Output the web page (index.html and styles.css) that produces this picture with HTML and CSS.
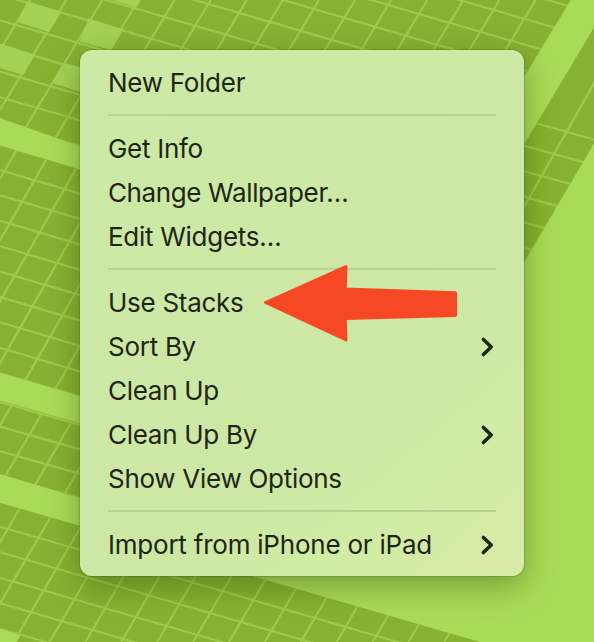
FILE: index.html
```
<!DOCTYPE html>
<html lang="en">
<head>
<meta charset="utf-8">
<title>Desktop</title>
<link rel="stylesheet" href="styles.css">
</head>
<body>
<main class="desktop">
  <svg class="wallpaper" viewBox="0 0 594 642" aria-hidden="true">
    <defs>
      <clipPath id="top"><path d="M0 0H571L524 77L400 260L0 118Z"/></clipPath>
      <clipPath id="left"><path d="M0 145.5L200 205.5V431L0 372.5Z"/></clipPath>
      <clipPath id="strip"><path d="M0 400.5L200 457.5V534L0 474Z"/></clipPath>
      <clipPath id="bottom"><path d="M0 502.7L480 642H17L20.5 635L0 628.5Z"/></clipPath>
      <clipPath id="right"><path d="M594 27.5L500 185V303L594 143.5Z"/></clipPath>
    </defs>
    <rect class="ground" width="594" height="642"/>
    <g id="grids"></g>
    <g class="bright">
      <path d="M27.5 1.5L61.5 12L49 32L17 22Z"/>
      <path d="M88.5 18.5L123.5 29.5L111.5 50L79.5 41.5Z"/>
      <path d="M0 43.5L35 54.5L23.5 75L0 68Z"/>
      <path d="M63.5 62.5L90 70V95L52 83Z"/>
      <path d="M112 0H141L136 7.5Z"/>
    </g>
  </svg>
  <nav class="menu">
    <div class="item"><span>New Folder</span></div>
    <hr>
    <div class="item"><span>Get Info</span></div>
    <div class="item"><span class="tight">Change Wallpaper…</span></div>
    <div class="item"><span>Edit Widgets…</span></div>
    <hr>
    <div class="item"><span>Use Stacks</span></div>
    <div class="item"><span>Sort By</span><svg class="chevron" viewBox="0 0 14 20"><path d="M2.4 2.4L10.2 10L2.4 17.6"/></svg></div>
    <div class="item"><span>Clean Up</span></div>
    <div class="item"><span>Clean Up By</span><svg class="chevron" viewBox="0 0 14 20"><path d="M2.4 2.4L10.2 10L2.4 17.6"/></svg></div>
    <div class="item"><span>Show View Options</span></div>
    <hr>
    <div class="item"><span class="loose">Import from iPhone or iPad</span><svg class="chevron" viewBox="0 0 14 20"><path d="M2.4 2.4L10.2 10L2.4 17.6"/></svg></div>
  </nav>
  <svg class="arrow" viewBox="0 0 196 80"><path d="M2.5 39.5L83 3.5L82.2 26L192.5 29.8V52.5L82.2 55.4L83 77Z"/></svg>
</main>
<script src="wallpaper.js"></script>
</body>
</html>
```
FILE: styles.css
```
body { margin: 0; }
.desktop {
  position: relative;
  box-sizing: border-box;
  width: 594px;
  height: 642px;
  padding: 50px 70px 66px 80px;
  overflow: hidden;
  font-family: Inter, "Liberation Sans", sans-serif;
}
.wallpaper { position: absolute; inset: 0; width: 594px; height: 642px; }
.ground { fill: #aadb57; }
.tile { fill: #87b231; }
.line { stroke: #9ecb4a; stroke-width: 2.2; }
.bright { fill: #a3d254; }
.menu {
  position: relative;
  box-sizing: border-box;
  width: 444px;
  height: 526px;
  padding: 11px 28px 9px;
  border-radius: 12px;
  background: linear-gradient(140deg, #cde9a6 0%, #cde8a5 65%, #d1eca4 80%, #d8eaa7 100%);
  box-shadow: 0 0 1.5px rgba(20, 50, 0, .75), 0 10px 32px rgba(35, 60, 0, .38);
}
.item {
  display: flex;
  align-items: center;
  justify-content: space-between;
  height: 44px;
  color: #1e2517;
  font-size: 26px;
  letter-spacing: -.28px;
  line-height: 44px;
  white-space: nowrap;
}
.tight { letter-spacing: -.38px; }
.loose { letter-spacing: -.22px; }
hr {
  height: 2px;
  margin: 9px 0 11px;
  border: 0;
  background: #b8d194;
}
.chevron { width: 14px; height: 20px; margin-right: 1px; }
.chevron path {
  fill: none;
  stroke: #1e2517;
  stroke-width: 3.5;
  stroke-linecap: round;
  stroke-linejoin: round;
}
.arrow { position: absolute; left: 263px; top: 263px; width: 196px; height: 80px; }
.arrow path { fill: #f64825; stroke: #f64825; stroke-width: 3; stroke-linejoin: round; }
```
FILE: wallpaper.js
```
// Each plane: x of first steep line at y=0, its spacing and lean;
// y of first shallow line at x=0, its spacing and slope.
const planes = [
  { clip: 'top', x: -5.9, dx: 36.1, lean: 0.603, y: -133.2, dy: 25.6, slope: 0.29 },
  { clip: 'left', x: 137.4, dx: 35.1, lean: 0.572, y: 170, dy: 25.4, slope: 0.295 },
  { clip: 'strip', x: 281.5, dx: 34.7, lean: 0.58, y: 426.5, dy: 24.5, slope: 0.285 },
  { clip: 'bottom', x: 352, dx: 35.9, lean: 0.583, y: 526.7, dy: 25.5, slope: 0.29 },
  { clip: 'right', x: 641, dx: 200, lean: 0.565, y: -1.2, dy: 25.6, slope: 0.28 }
];
const ns = 'http://www.w3.org/2000/svg';
const add = (parent, name, attrs) => {
  const el = document.createElementNS(ns, name);
  for (const key in attrs) el.setAttribute(key, attrs[key]);
  return parent.appendChild(el);
};
for (const p of planes) {
  const g = add(document.getElementById('grids'), 'g', { 'clip-path': `url(#${p.clip})` });
  add(g, 'rect', { class: 'tile', width: 594, height: 642 });
  for (let i = -1; i < 24; i++) {
    const x = p.x + i * p.dx;
    add(g, 'line', { class: 'line', x1: x, y1: 0, x2: x - p.lean * 642, y2: 642 });
    const y = p.y + i * p.dy;
    add(g, 'line', { class: 'line', x1: 0, y1: y, x2: 594, y2: y + p.slope * 594 });
  }
}
```
